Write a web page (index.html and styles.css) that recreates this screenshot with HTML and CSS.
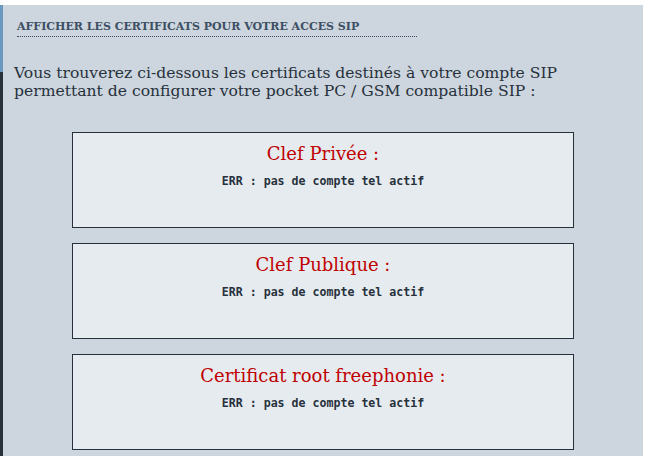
FILE: index.html
```html
<!DOCTYPE html>
<html lang="fr">
<head>
<meta charset="utf-8">
<title>Certificats SIP</title>
<link rel="stylesheet" href="styles.css">
</head>
<body>
<div class="panel">
  <h2 class="title">AFFICHER LES CERTIFICATS POUR VOTRE ACCES SIP</h2>
  <p class="intro">Vous trouverez ci-dessous les certificats destinés à votre compte SIP<br>permettant de configurer votre pocket PC / GSM compatible SIP :</p>
  <div class="certs">
    <div class="cert">
      <div class="cert-name">Clef Privée :</div>
      <div class="cert-err">ERR : pas de compte tel actif</div>
    </div>
    <div class="cert">
      <div class="cert-name">Clef Publique :</div>
      <div class="cert-err">ERR : pas de compte tel actif</div>
    </div>
    <div class="cert">
      <div class="cert-name">Certificat root freephonie :</div>
      <div class="cert-err">ERR : pas de compte tel actif</div>
    </div>
  </div>
</div>
</body>
</html>
```
FILE: styles.css
```css
html, body {
  margin: 0;
  padding: 0;
  background: #ffffff;
}
body {
  padding-top: 5px;
  font-family: "DejaVu Serif", serif;
  color: #27313c;
}
.panel {
  width: 643px;
  height: 460px;
  box-sizing: border-box;
  background:
    linear-gradient(to bottom, #6a98bf 0, #6a98bf 67px, #27313c 67px) left top / 3px 100% no-repeat,
    #cdd6de;
  padding-top: 13px;
}
.title {
  margin: 0 0 0 17px;
  width: 400px;
  font-family: "DejaVu Serif", serif;
  font-size: 11px;
  font-weight: bold;
  line-height: 17px;
  color: #3d4f64;
  border-bottom: 1px dotted #3d4f64;
  padding-bottom: 1px;
}
.intro {
  margin: 27px 0 0 14px;
  font-size: 15.6px;
  line-height: 18px;
  color: #27313c;
}
.certs {
  display: flex;
  flex-direction: column;
  gap: 15px;
  margin: 32px 0 0 72px;
  width: 502px;
}
.cert {
  height: 96px;
  box-sizing: border-box;
  background: #e6ebef;
  border: 1px solid #27313c;
  text-align: center;
  padding-top: 9px;
}
.cert-name {
  font-family: "DejaVu Serif", serif;
  font-size: 18px;
  line-height: 23px;
  color: #c00000;
}
.cert-err {
  margin-top: 9px;
  font-family: "DejaVu Sans Mono", monospace;
  font-size: 11.6px;
  font-weight: bold;
  line-height: 14px;
  color: #27313c;
}
```
